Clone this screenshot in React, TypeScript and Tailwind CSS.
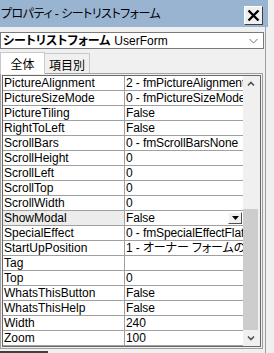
import React from "react";

const rows: [string, string][] = [
  ["PictureAlignment", "2 - fmPictureAlignmentCenter"],
  ["PictureSizeMode", "0 - fmPictureSizeModeClip"],
  ["PictureTiling", "False"],
  ["RightToLeft", "False"],
  ["ScrollBars", "0 - fmScrollBarsNone"],
  ["ScrollHeight", "0"],
  ["ScrollLeft", "0"],
  ["ScrollTop", "0"],
  ["ScrollWidth", "0"],
  ["ShowModal", "False"],
  ["SpecialEffect", "0 - fmSpecialEffectFlat"],
  ["StartUpPosition", "1 - オーナー フォームの中央"],
  ["Tag", ""],
  ["Top", "0"],
  ["WhatsThisButton", "False"],
  ["WhatsThisHelp", "False"],
  ["Width", "240"],
  ["Zoom", "100"],
];

export default function App() {
  return (
    <div className="w-[274px] h-[353px] bg-[#f0f0f0] overflow-hidden flex flex-col text-[12px] leading-none text-black font-['Liberation_Sans','Noto_Sans_CJK_JP',sans-serif] [font-feature-settings:'palt']">
      {/* title bar */}
      <div className="flex">
        <div className="w-[268px] h-[27px] bg-[#99b4d1] flex items-center justify-between pl-[1px] pr-[5px]">
          <span className="tracking-[-0.5px] whitespace-nowrap">プロパティ - シートリストフォーム</span>
          <div className="w-[19px] h-[19px] mt-[3px] bg-[#f0f0f0] border border-t-white border-l-white border-r-[#404040] border-b-[#404040] flex items-center justify-center">
            <svg width="13" height="13" viewBox="0 0 13 13">
              <path d="M1.5 1.5 L11.5 11.5 M11.5 1.5 L1.5 11.5" stroke="black" strokeWidth="2.4" />
            </svg>
          </div>
        </div>
      </div>
      {/* body */}
      <div className="flex flex-1">
        <div className="w-[265px] flex flex-col">
          {/* combo */}
          <div className="mt-[5px] w-[264px] h-[17px] bg-white border border-[#7a7a7a] flex items-center justify-between pl-[2px] pr-[5px]">
            <span className="whitespace-nowrap">
              <span className="font-bold">シートリストフォーム</span>
              <span className="ml-[4px]">UserForm</span>
            </span>
            <svg width="9" height="6" viewBox="0 0 9 6">
              <path d="M0.5 1 L4.5 5 L8.5 1" stroke="#707070" strokeWidth="1" fill="none" />
            </svg>
          </div>
          {/* tabs */}
          <div className="mt-[2px] flex items-end h-[22px]">
            <div className="w-[45px] h-[22px] bg-white border border-b-0 border-[#c8c8c8] flex items-center justify-center relative z-10 -mb-[1px]">
              <span className="font-['Noto_Sans_CJK_JP',sans-serif] text-[12px]">全体</span>
            </div>
            <div className="w-[45px] h-[20px] bg-[#f0f0f0] border border-b-0 border-l-0 border-[#c8c8c8] flex items-center justify-center pt-[2px]">
              <span className="font-['Noto_Sans_CJK_JP',sans-serif] text-[12px]">項目別</span>
            </div>
          </div>
          {/* grid */}
          <div className="w-[263px] border border-[#a0a0a0] bg-[#f0f0f0] p-[1px]">
            <div className="border border-[#696969] bg-[#f0f0f0] flex">
              <div className="w-[240px] flex flex-col bg-white">
                {rows.map(([name, value]) => {
                  const selected = name === "ShowModal";
                  return (
                    <div key={name} className="flex h-[15px] border-b border-[#a0a0a0]">
                      <div
                        className={
                          "w-[122px] border-r border-[#a0a0a0] flex items-center pl-[1px] whitespace-nowrap overflow-hidden " +
                          (selected ? "bg-[#ececec]" : "bg-white")
                        }
                      >
                        {name}
                      </div>
                      <div className="flex-1 flex items-center pl-[1px] whitespace-nowrap overflow-hidden relative">
                        <span className="tracking-[-0.1px]">{value}</span>
                        {selected && (
                          <div className="absolute right-[1px] top-[1px] w-[14px] h-[12px] bg-[#f0f0f0] border border-t-white border-l-white border-r-[#505050] border-b-[#505050] flex items-center justify-center">
                            <svg width="7" height="4" viewBox="0 0 7 4">
                              <path d="M0 0 L7 0 L3.5 4 Z" fill="black" />
                            </svg>
                          </div>
                        )}
                      </div>
                    </div>
                  );
                })}
              </div>
              {/* scrollbar */}
              <div className="w-[15px] flex flex-col bg-[#f0f0f0]">
                <div className="h-[15px] flex items-center justify-center">
                  <svg width="8" height="6" viewBox="0 0 8 6">
                    <path d="M1 4.5 L4 1.5 L7 4.5" stroke="#505050" strokeWidth="1.6" fill="none" />
                  </svg>
                </div>
                <div className="h-[118px]" />
                <div className="h-[121px] bg-[#cdcdcd]" />
                <div className="h-[16px] flex items-center justify-center">
                  <svg width="8" height="6" viewBox="0 0 8 6">
                    <path d="M1 1.5 L4 4.5 L7 1.5" stroke="#505050" strokeWidth="1.6" fill="none" />
                  </svg>
                </div>
              </div>
              <div className="flex-1 bg-[#f0f0f0]" />
            </div>
          </div>
          <div className="flex-1" />
          <div className="w-[48px] h-[2px] bg-[#404040]" />
        </div>
        <div className="w-[1px] bg-[#a0a0a0]" />
        <div className="flex-1 bg-[#f0f0f0]" />
      </div>
    </div>
  );
}
